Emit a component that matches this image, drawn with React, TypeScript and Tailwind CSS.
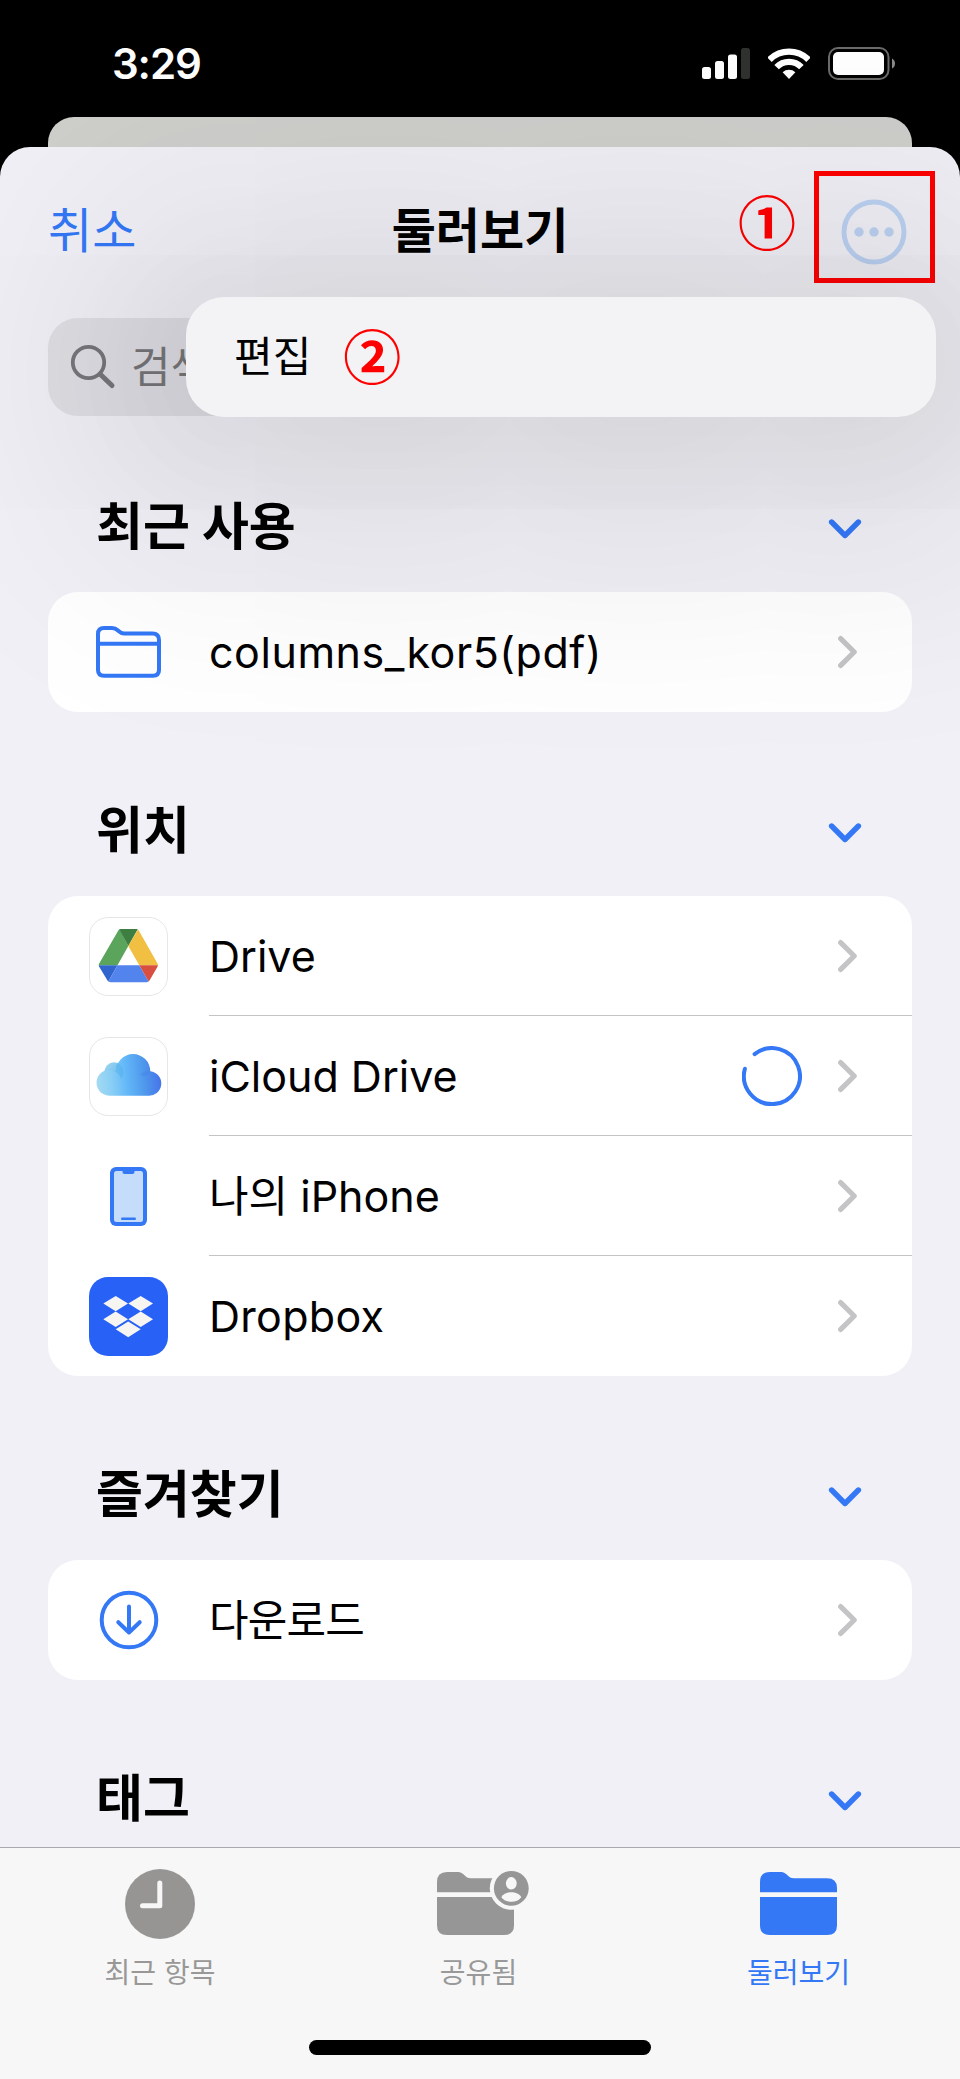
import type { ReactNode } from "react";

const ChevronDown = () => (
  <svg width="34" height="20" viewBox="0 0 34 20" fill="none">
    <path d="M3.600 3 17 16.500 30.400 3" stroke="#3478f6" strokeWidth="5.4" strokeLinecap="round" strokeLinejoin="round" />
  </svg>
);

const ChevronRight = () => (
  <svg width="20" height="34" viewBox="0 0 20 34" fill="none">
    <path d="M3.700 3.600 17.200 17 3.700 30.400" stroke="#c4c4c6" strokeWidth="5.2" strokeLinecap="round" strokeLinejoin="round" />
  </svg>
);

const FolderOutline = () => (
  <svg width="65" height="52" viewBox="0 0 65 52" fill="none" stroke="#3478f6" strokeWidth="4">
    <path d="M2 44V8Q2 2 8 2H16C19.500 2 20.500 3.200 22.500 5C24.500 6.800 25.500 7.500 28 7.500H56.500Q63 7.500 63 14V44Q63 49.700 57 49.700H8Q2 49.700 2 44Z" />
    <path d="M2 17.800H63" />
  </svg>
);

const DriveIcon = () => (
  <svg width="79" height="79" viewBox="1 1 77 77" className="rounded-[19px] border border-[#e6e6e6]">
    <defs>
      <clipPath id="drive">
        <path d="M32 12H47.500Q49 12 49.800 13.400L68.500 46.500Q69.300 48.200 68.500 49.800L60.500 63.600Q59.500 65.300 57.500 65.300H21.500Q19.500 65.300 18.500 63.600L10.200 49.800Q9.300 48.200 10.200 46.500L29.300 13.400Q30.200 12 32 12Z" />
      </clipPath>
    </defs>
    <g clipPath="url(#drive)">
      <path d="M8 48.300 30 11 39.300 29 28.500 48.300Z" fill="#5aa55b" />
      <path d="M29 10H50L39.300 29Z" fill="#3e7e40" />
      <path d="M49.800 11 71 48.300H50.300L39.300 29Z" fill="#f1bf42" />
      <path d="M8 48.300H28.500L18.500 66Z" fill="#3164cc" />
      <path d="M28.500 48.300H50.300L60.500 66H18.500Z" fill="#5383ec" />
      <path d="M50.300 48.300H71L60.500 66Z" fill="#d84f3f" />
    </g>
  </svg>
);

const CloudIcon = () => (
  <svg width="79" height="79" viewBox="1 1 77 77" className="rounded-[19px] border border-[#e6e6e6]">
    <defs>
      <linearGradient id="cloud" gradientUnits="userSpaceOnUse" x1="8" y1="48" x2="71" y2="42">
        <stop offset="0" stopColor="#a4daf2" />
        <stop offset="0.25" stopColor="#86cdf5" />
        <stop offset="0.48" stopColor="#62b7f8" />
        <stop offset="0.75" stopColor="#4f98ec" />
        <stop offset="1" stopColor="#4676ea" />
      </linearGradient>
      <linearGradient id="puff" x1="0" y1="0" x2="1" y2="0.6">
        <stop offset="0" stopColor="#8fd2ef" />
        <stop offset="1" stopColor="#4fabe9" />
      </linearGradient>
    </defs>
    <circle cx="25" cy="35" r="9.700" fill="url(#puff)" opacity="0.85" />
    <path
      d="M20.500 58.700A13 13 0 1 1 26.900 34.400A17.200 17.200 0 0 1 61.300 34.200A12.300 12.300 0 0 1 58.700 58.700Z"
      fill="url(#cloud)"
    />
    <path d="M15.500 33.600A13 13 0 0 1 32 41.500A10 10 0 0 0 34 32.500A9.700 9.700 0 0 0 28 26A17 17 0 0 0 26.900 34.400A13 13 0 0 0 15.500 33.600Z" fill="#41a6e6" opacity="0.35" />
    <path d="M61.300 34.200A12.300 12.300 0 0 0 51 37.500Q57 42 61.300 34.200Z" fill="#3f7ee6" opacity="0.3" />
  </svg>
);

const PhoneIcon = () => (
  <svg width="37" height="59" viewBox="0 0 37 59">
    <rect width="37" height="59" rx="6" fill="#3478f6" />
    <rect x="4" y="4" width="29" height="51" rx="2.500" fill="#c5dcfb" />
    <path d="M12.500 3H24.500V5Q24.500 7 22.500 7H14.500Q12.500 7 12.500 5Z" fill="#3478f6" />
    <rect x="11" y="50.500" width="15" height="2.500" rx="1.200" fill="#3478f6" />
  </svg>
);

const DropboxIcon = () => (
  <svg width="79" height="79" viewBox="0 0 79 79" className="rounded-[19px] bg-[#2861f6]" fill="#f7f5f2">
    <path d="M26.700 19 39 26.600 26.700 34.300 14.300 26.600Z" />
    <path d="M51.700 19 64 26.600 51.700 34.300 39.300 26.600Z" />
    <path d="M26.700 34.500 39 42.200 26.700 50 14.300 42.200Z" />
    <path d="M51.700 34.500 64 42.200 51.700 50 39.300 42.200Z" />
    <path d="M39.200 44.400 51.700 52.300 39.200 60.300 26.700 52.300Z" />
  </svg>
);

const DownloadIcon = () => (
  <svg width="60" height="60" viewBox="0 0 60 60" fill="none" stroke="#3478f6" strokeWidth="4" strokeLinecap="round" strokeLinejoin="round">
    <circle cx="30" cy="30" r="27.300" />
    <path d="M30 16.500V42M19.300 32.200 30 42.500 40.700 32.200" />
  </svg>
);

const Spinner = () => (
  <svg width="60" height="60" viewBox="0 0 60 60" fill="none">
    <path d="M12.600 8.100A28 28 0 1 1 2.900 22.700" stroke="#3478f6" strokeWidth="4" strokeLinecap="round" />
  </svg>
);

const FOLDER_TOP = "M0 20.300V10Q0 0 10 0H20C24 0 25.500 1.500 27.500 3.200C29.500 5 30.500 6.300 34 6.300H67Q77 6.300 77 16V20.300Z";
const FOLDER_BODY = "M0 25H77V53.500Q77 63 67 63H10Q0 63 0 53.500Z";

const ClockTab = () => (
  <svg width="70" height="70" viewBox="0 0 70 70">
    <circle cx="35" cy="35" r="35" fill="#969594" />
    <path d="M34.800 14V36.700H17.500" fill="none" stroke="#f7f7f7" strokeWidth="5" strokeLinecap="round" strokeLinejoin="round" />
  </svg>
);

const SharedTab = () => (
  <svg width="92" height="70" viewBox="0 0 92 70" fill="#969696" className="ml-[8px]">
    <g transform="translate(0 3)">
      <path d={FOLDER_TOP} />
      <path d={FOLDER_BODY} />
    </g>
    <circle cx="74.300" cy="19.300" r="21.500" fill="#f7f7f7" />
    <circle cx="74.300" cy="19.300" r="17.400" />
    <g fill="#f7f7f7">
      <ellipse cx="74.300" cy="14.300" rx="5.400" ry="6.200" />
      <path d="M64.300 28.200C66 25 70 23.200 74.300 23.200S82.600 25 84.300 28.200C82 31.200 78.500 32.800 74.300 32.800S66.600 31.200 64.300 28.200Z" />
    </g>
  </svg>
);

const BrowseTab = () => (
  <svg width="77" height="70" viewBox="0 0 77 70" fill="#3478f6" className="mr-[1px]">
    <g transform="translate(0 3)">
      <path d={FOLDER_TOP} />
      <path d={FOLDER_BODY} />
    </g>
  </svg>
);

type Item = { label: string; icon: ReactNode; text?: string; loading?: boolean };

const SECTIONS: { title: string; items: Item[] }[] = [
  {
    title: "최근 사용",
    items: [{ label: "columns_kor5(pdf)", icon: <FolderOutline />, text: "tracking-[0.55px]" }],
  },
  {
    title: "위치",
    items: [
      { label: "Drive", icon: <DriveIcon /> },
      { label: "iCloud Drive", icon: <CloudIcon />, loading: true },
      { label: "나의 iPhone", icon: <PhoneIcon /> },
      { label: "Dropbox", icon: <DropboxIcon />, text: "tracking-[0.3px]" },
    ],
  },
  { title: "즐겨찾기", items: [{ label: "다운로드", icon: <DownloadIcon />, text: "tracking-[-0.8px]" }] },
  { title: "태그", items: [] },
];

const TABS = [
  { label: "최근 항목", icon: <ClockTab />, style: "text-[#999897]" },
  { label: "공유됨", icon: <SharedTab />, style: "text-[#999999] pr-[3px]" },
  { label: "둘러보기", icon: <BrowseTab />, style: "text-[#3478f6] pr-[3px]" },
];

function StatusBar() {
  return (
    <div className="h-[117px] shrink-0 flex items-start justify-between pl-[112px] pr-[64px] pt-[47px]">
      <span className="text-[42px] leading-[34px] tracking-[-1.1px] font-semibold text-white">3:29</span>
      <div className="flex items-center gap-[18px]">
        <svg width="48" height="33" viewBox="0 0 48 33" fill="#fff">
          <rect x="0" y="20" width="9" height="12" rx="2.500" />
          <rect x="13" y="14" width="9" height="18" rx="2.500" />
          <rect x="26" y="7.500" width="9" height="24.500" rx="2.500" />
          <rect x="39" y="1" width="9" height="31" rx="2.500" fill="#30322f" />
        </svg>
        <svg width="42" height="33" viewBox="0 -1 42 33" fill="none">
          <path d="M1.500 11.700A27.800 27.800 0 0 1 40.500 11.700M8.600 19.200A17 17 0 0 1 33.400 19.200" stroke="#fff" strokeWidth="6.200" />
          <path d="M21 31 14.600 24.300A9.600 9.600 0 0 1 27.400 24.300Z" fill="#fff" />
        </svg>
        <svg width="68" height="33" viewBox="0 0 68 33">
          <rect x="1" y="1" width="59.500" height="31" rx="9" fill="none" stroke="#6b6b6a" strokeWidth="2" />
          <rect x="5" y="5" width="51" height="23" rx="5" fill="#fff" />
          <path d="M64 11.500Q67 13 67 16.500T64 21.500Z" fill="#8a8a89" />
        </svg>
      </div>
    </div>
  );
}

export default function App() {
  return (
    <div className="relative w-[960px] h-[2079px] flex flex-col overflow-hidden bg-black text-black font-['Inter','Noto_Sans_CJK_KR',sans-serif]">
      <StatusBar />
      <div className="h-[30px] shrink-0 mx-[48px] rounded-t-[26px] bg-[#cfd0cc]" />

      {/* Sheet */}
      <div className="flex-1 min-h-0 flex flex-col rounded-t-[30px] bg-[#f1f0f6] overflow-hidden">
        <header className="h-[171px] shrink-0 grid grid-cols-3 items-center px-[48px] pb-[3px]">
          <button className="text-left text-[48px] leading-[60px] text-[#3478f6]">취소</button>
          <h1 className="text-center text-[48px] leading-[60px] font-bold">둘러보기</h1>
          <div className="flex items-center justify-end -mr-[23px] -mt-[8px]">
            <span className="mr-[18px] -mt-[14px] text-[58px] leading-[60px] font-bold text-[#ff0000] font-['Noto_Sans_CJK_KR',sans-serif]">①</span>
            <div className="w-[121px] h-[112px] shrink-0 border-[5px] border-[#ff0000] flex items-center justify-center">
              <svg width="66" height="66" viewBox="0 0 66 66" fill="#bdd3f3" className="mt-[9px] -ml-[2px]">
                <circle cx="33" cy="33" r="30" fill="none" stroke="#bdd3f3" strokeWidth="5" />
                <circle cx="18" cy="33" r="4.700" />
                <circle cx="33" cy="33" r="4.700" />
                <circle cx="48" cy="33" r="4.700" />
              </svg>
            </div>
          </div>
        </header>

        <div className="h-[98px] shrink-0 mx-[48px] rounded-[30px] bg-[#dfdee4] flex items-center pl-[22px]">
          <svg width="46" height="46" viewBox="0 0 46 46" fill="none" stroke="#77777b" strokeLinecap="round">
            <circle cx="18.500" cy="18.500" r="15.700" strokeWidth="3.800" />
            <path d="M30.500 30.500 42 41.500" strokeWidth="5" />
          </svg>
          <span className="ml-[15px] text-[43px] leading-[60px] text-[#77777b]">검색</span>
        </div>

        <main className="flex-1 min-h-0 overflow-hidden -mt-[8px]">
          {SECTIONS.map((section) => (
            <section key={section.title}>
              <div className="h-[184px] flex items-end justify-between pl-[96px] pr-[98px]">
                <h2 className="text-[51px] leading-[60px] font-bold pb-[35px]">{section.title}</h2>
                <div className="pb-[53px]">
                  <ChevronDown />
                </div>
              </div>
              <div className="mx-[48px] rounded-[30px] bg-white overflow-hidden">
                {section.items.map((item, i) => (
                  <div key={item.label} className="h-[120px] flex items-center">
                    <div className="w-[161px] shrink-0 flex justify-center">{item.icon}</div>
                    <div
                      className={`flex-1 h-full flex items-center pr-[55px] ${
                        i < section.items.length - 1 ? "border-b border-[#c4c4c6]" : ""
                      }`}
                    >
                      <span className={`flex-1 text-[43px] leading-[60px] ${item.text ?? ""}`}>{item.label}</span>
                      {item.loading && (
                        <div className="mr-[35px]">
                          <Spinner />
                        </div>
                      )}
                      <ChevronRight />
                    </div>
                  </div>
                ))}
              </div>
            </section>
          ))}
        </main>
      </div>

      {/* Tab bar */}
      <nav className="relative z-10 h-[232px] shrink-0 border-t border-[#a9a9ae] bg-[#f7f7f7] flex flex-col items-center">
        <div className="w-full grid grid-cols-3 pt-[21px]">
          {TABS.map((tab) => (
            <div key={tab.label} className={`flex flex-col items-center ${tab.style}`}>
              {tab.icon}
              <span className="mt-[14px] text-[28px] leading-[40px]">{tab.label}</span>
            </div>
          ))}
        </div>
        <div className="mt-[47px] w-[342px] h-[15px] rounded-full bg-black" />
      </nav>

      {/* Context menu */}
      <div className="absolute left-[186px] top-[297px] w-[750px] h-[120px] rounded-[38px] bg-[#f3f3f5] shadow-[0_5px_130px_30px_rgba(0,0,0,0.04),0_15px_240px_120px_rgba(0,0,0,0.09)] flex items-center pl-[48px]">
        <span className="text-[42px] leading-[60px]">편집</span>
        <span className="ml-[32px] -mt-[6px] text-[58px] leading-[60px] font-bold text-[#ff0000] font-['Noto_Sans_CJK_KR',sans-serif]">②</span>
      </div>
    </div>
  );
}
